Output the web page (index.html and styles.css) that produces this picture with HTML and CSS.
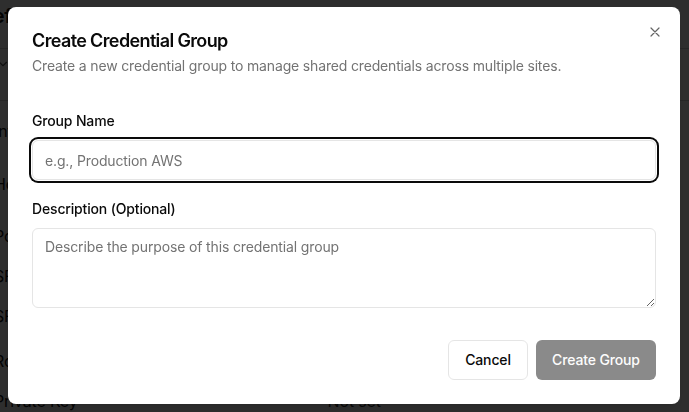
FILE: index.html
```html
<!DOCTYPE html>
<html lang="en">
<head>
<meta charset="utf-8">
<title>Create Credential Group</title>
<link rel="stylesheet" href="styles.css">
</head>
<body>
<div class="page">
  <div class="page-title">Ref</div>
  <div class="page-select">
    <svg class="chev" viewBox="0 0 24 24" width="14" height="14"><path d="m6 9 6 6 6-6" fill="none" stroke="currentColor" stroke-width="2" stroke-linecap="round" stroke-linejoin="round"/></svg>
  </div>
  <div class="page-row r1">Int</div>
  <div class="page-row r2">Ho</div>
  <div class="page-row r3">Po</div>
  <div class="page-row r4">SF</div>
  <div class="page-row r5">SF</div>
  <div class="page-row r6">Ro</div>
  <div class="page-row r7"><span>Private Key</span><span class="val">Not set</span></div>
</div>

<div class="overlay"></div>

<div class="dialog" role="dialog" aria-labelledby="dlg-title">
  <div class="dialog-header">
    <h2 id="dlg-title" class="dialog-title">Create Credential Group</h2>
    <p class="dialog-desc">Create a new credential group to manage shared credentials across multiple sites.</p>
  </div>

  <div class="dialog-body">
    <div class="field">
      <label class="label" for="gname">Group Name</label>
      <input id="gname" class="input focused" type="text" placeholder="e.g., Production AWS">
    </div>
    <div class="field">
      <label class="label" for="gdesc">Description (Optional)</label>
      <textarea id="gdesc" class="textarea" placeholder="Describe the purpose of this credential group"></textarea>
    </div>
  </div>

  <div class="dialog-footer">
    <button class="btn btn-outline" type="button">Cancel</button>
    <button class="btn btn-primary" type="button" disabled>Create Group</button>
  </div>

  <button class="dialog-close" type="button" aria-label="Close">
    <svg viewBox="0 0 24 24" width="16" height="16"><path d="M18 6 6 18M6 6l12 12" fill="none" stroke="currentColor" stroke-width="1.8" stroke-linecap="round" stroke-linejoin="round"/></svg>
  </button>
</div>
</body>
</html>
```
FILE: styles.css
```css
* { box-sizing: border-box; }

html, body {
  margin: 0;
  height: 100%;
}

body {
  font-family: Inter, "Liberation Sans", sans-serif;
  background: #ffffff;
  color: #0a0a0a;
  overflow: hidden;
  letter-spacing: -0.01em;
}

/* background page (dimmed behind the dialog) */
.page {
  display: flex;
  flex-direction: column;
  margin-left: -6px;
  font-size: 16px;
  color: #111;
}

.page-title {
  height: 48px;
  padding-top: 4px;
  font-size: 20px;
  font-weight: 600;
  margin-left: -14px;
}

.page-select {
  height: 53px;
  border-top: 1px solid #cfcfcf;
  border-bottom: 1px solid #cfcfcf;
  padding: 8px 0 0 2px;
}

.chev { display: block; color: #555; }

.page-row {
  display: flex;
  align-items: flex-end;
}
.r1 { height: 40px; }
.r2 { height: 53px; }
.r3 { height: 52px; }
.r4 { height: 40px; }
.r5 { height: 40px; }
.r6 { height: 45px; }
.r7 { height: 40px; }
.r7 .val { margin-left: 250px; color: #333; }

.overlay {
  position: fixed;
  inset: 0;
  background: rgba(0, 0, 0, 0.82);
}

/* dialog */
.dialog {
  position: fixed;
  left: 8px;
  top: 7px;
  width: 672px;
  display: flex;
  flex-direction: column;
  padding: 24px;
  background: #ffffff;
  border-radius: 8px;
  box-shadow: 0 10px 15px -3px rgba(0,0,0,0.1), 0 4px 6px -4px rgba(0,0,0,0.1);
}

.dialog-header {
  display: flex;
  flex-direction: column;
  gap: 6px;
}

.dialog-title {
  margin: 0;
  font-size: 18px;
  line-height: 18px;
  padding-top: 1px;
  font-weight: 600;
  letter-spacing: -0.035em;
  color: #0a0a0a;
}

.dialog-desc {
  margin: 0;
  font-size: 14px;
  line-height: 20px;
  color: #737373;
}

.dialog-body {
  display: flex;
  flex-direction: column;
  gap: 19px;
  padding-top: 35px;
}

.field {
  display: flex;
  flex-direction: column;
  gap: 9px;
}

.label {
  font-size: 14px;
  line-height: 20px;
  font-weight: 500;
  color: #0a0a0a;
}

.input,
.textarea {
  width: 100%;
  font-family: inherit;
  font-size: 14px;
  line-height: 20px;
  letter-spacing: -0.01em;
  color: #0a0a0a;
  background: #ffffff;
  border: 1px solid #e5e5e5;
  border-radius: 6px;
  padding: 8px 12px;
  outline: none;
}

.input { height: 40px; }

.input.focused {
  box-shadow: 0 0 0 1px #ffffff, 0 0 0 3px #0a0a0a;
}

.textarea {
  height: 80px;
  resize: vertical;
  display: block;
}

.input::placeholder,
.textarea::placeholder {
  color: #737373;
  opacity: 1;
}

.dialog-footer {
  display: flex;
  justify-content: flex-end;
  gap: 8px;
  padding-top: 32px;
}

.btn {
  height: 40px;
  padding: 0;
  border-radius: 6px;
  font-family: inherit;
  font-size: 14px;
  font-weight: 500;
  line-height: 20px;
  letter-spacing: -0.01em;
  white-space: nowrap;
  display: flex;
  align-items: center;
  justify-content: center;
  cursor: pointer;
}

.btn-outline {
  background: #ffffff;
  border: 1px solid #e5e5e5;
  color: #0a0a0a;
  width: 80px;
}

.btn-primary {
  background: #171717;
  border: 0;
  color: #fafafa;
  opacity: 0.5;
  width: 120px;
}

.dialog-close {
  position: absolute;
  top: 17px;
  right: 17px;
  width: 16px;
  height: 16px;
  padding: 0;
  border: 0;
  background: none;
  color: #3f3f3f;
  opacity: 0.8;
  display: flex;
  cursor: pointer;
}
.dialog-close svg { display: block; }
```
